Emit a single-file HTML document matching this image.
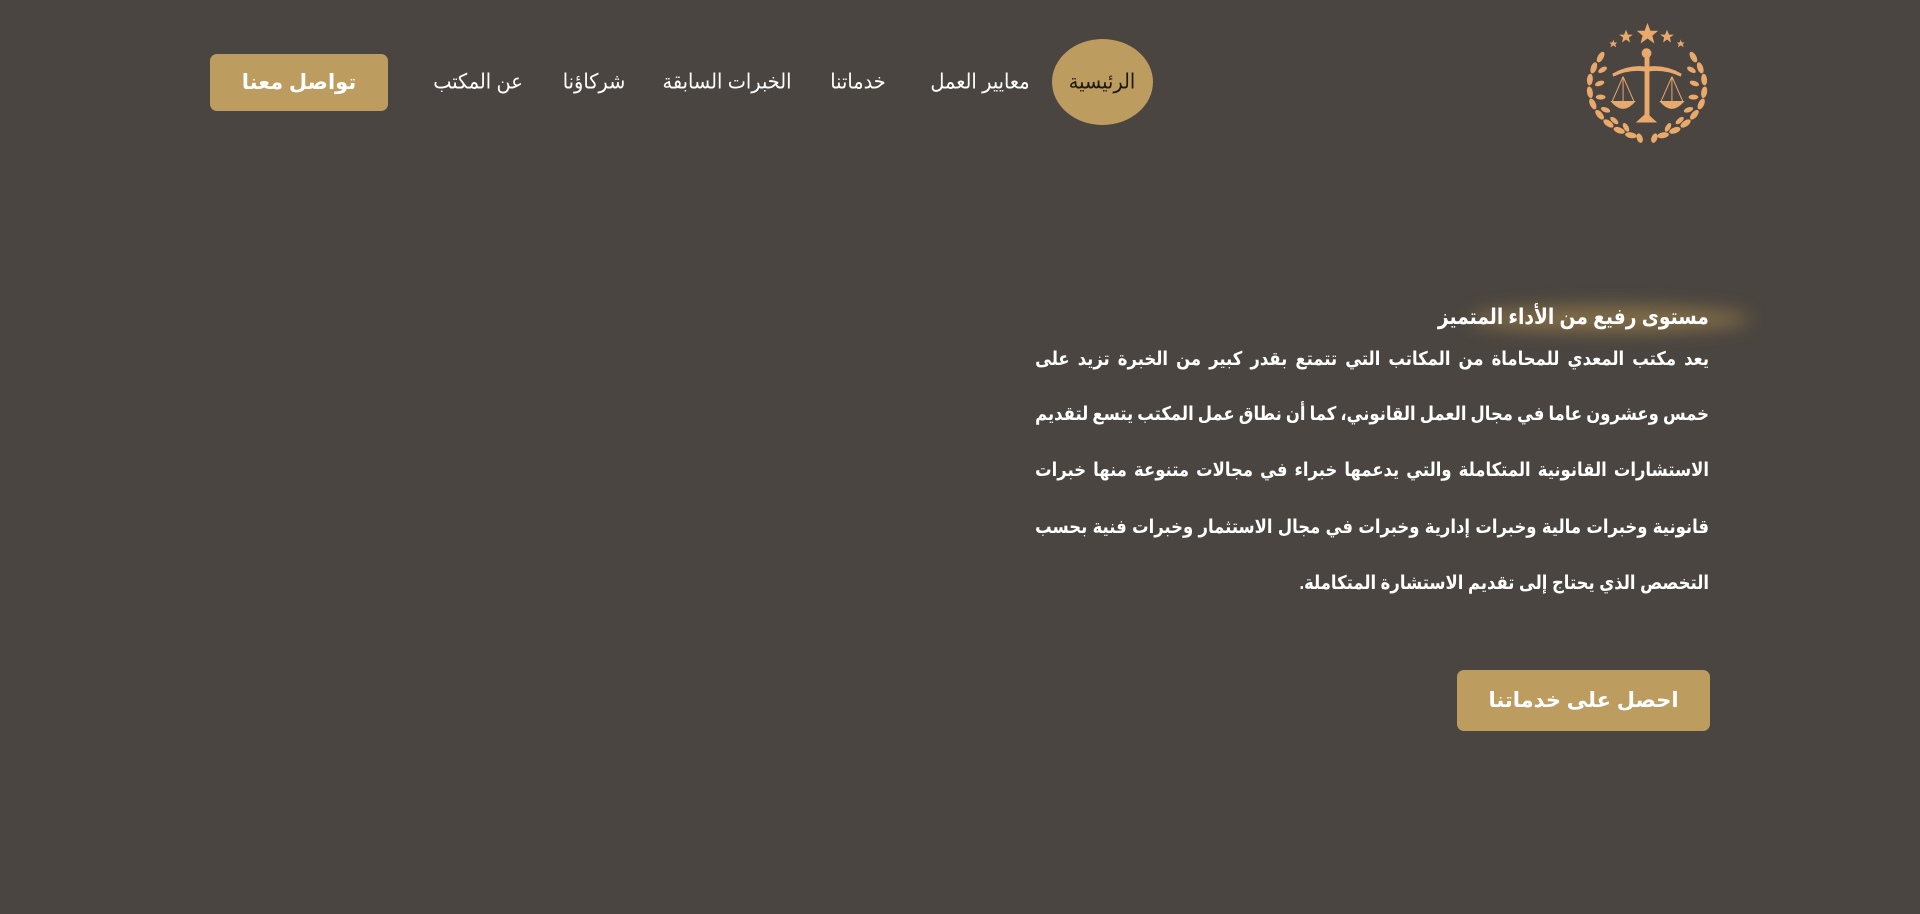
<!DOCTYPE html>
<html lang="ar" dir="rtl"><head><meta charset="utf-8">
<style>
*{margin:0;padding:0;box-sizing:border-box}
html,body{width:1920px;height:914px;overflow:hidden;background:#4a4540;font-family:"Liberation Sans","Noto Sans CJK SC","DejaVu Sans",sans-serif;color:#fff}
.abs{position:absolute}
.nav{position:absolute;top:82px;font-size:21px;color:#fff;transform:translate(-50%,-50%) scaleX(.92);white-space:nowrap}
.circle{left:1052px;top:39px;width:101px;height:86px;border-radius:50%;background:#bd9c5f}
.btn{background:#bd9c5f;border-radius:7px;display:flex;align-items:center;justify-content:center;font-weight:bold;color:#fff}
.line{position:absolute;right:211px;width:780px;font-size:19px;font-weight:bold;white-space:nowrap;line-height:24px;display:flex;justify-content:space-between;transform:scaleX(.864);transform-origin:right center}
.line.last{justify-content:flex-start;gap:6px}
.glow{left:1470px;top:306px;width:280px;height:26px;border-radius:50%;background:rgba(200,160,80,.45);filter:blur(9px)}
</style></head><body>
<svg class="abs" style="left:1585px;top:18px" width="125" height="127" viewBox="24 18 128 124">
<g fill="#e9a96c" stroke="none">
<polygon points="88,20 91,28 99,28 93,33 95,41 88,36 81,41 83,33 77,28 85,28"/>
<polygon points="66,27 68,32 73,32 69,35 70,40 66,37 62,40 63,35 59,32 64,32"/>
<polygon points="108,27 110,32 115,32 111,35 112,40 108,37 104,40 105,35 101,32 106,32"/>
<polygon points="53,37 54,40 57,40 55,42 56,45 53,43 50,45 51,42 49,40 52,40"/>
<polygon points="122,37 123,40 126,40 124,42 125,45 122,43 119,45 120,42 118,40 121,40"/>
<circle cx="87" cy="51" r="5"/>
<rect x="85" y="55" width="5" height="62"/>
<path d="M52,72 Q70,62 87,65 Q105,62 123,72 L122,75 Q105,67 87,70 Q70,67 53,75Z"/>
<path d="M50,100 Q63,116 76,100Z"/>
<path d="M100,100 Q113,116 126,100Z"/>
<path d="M76,122 L87,112 L98,122Z"/>
</g>
<g stroke="#e9a96c" stroke-width="1" fill="none">
<path d="M63,75 L52,100 M63,75 L74,100 M63,75 L63,100"/>
<path d="M113,75 L102,100 M113,75 L124,100 M113,75 L113,100"/>
</g>
<g fill="#e9a96c">
<g id="lf">
<ellipse cx="40" cy="55" rx="3" ry="6" transform="rotate(30 40 55)"/>
<ellipse cx="33" cy="66" rx="3" ry="6" transform="rotate(20 33 66)"/>
<ellipse cx="29" cy="78" rx="3" ry="6" transform="rotate(5 29 78)"/>
<ellipse cx="29" cy="91" rx="3" ry="6" transform="rotate(-10 29 91)"/>
<ellipse cx="32" cy="103" rx="3" ry="6" transform="rotate(-25 32 103)"/>
<ellipse cx="39" cy="114" rx="3" ry="6" transform="rotate(-40 39 114)"/>
<ellipse cx="48" cy="123" rx="3" ry="6" transform="rotate(-55 48 123)"/>
<ellipse cx="59" cy="130" rx="3" ry="6" transform="rotate(-70 59 130)"/>
<ellipse cx="71" cy="135" rx="3" ry="6" transform="rotate(-80 71 135)"/>
<ellipse cx="80" cy="138" rx="3" ry="5" transform="rotate(-20 80 138)"/>
<ellipse cx="42" cy="68" rx="2.5" ry="5" transform="rotate(60 42 68)"/>
<ellipse cx="39" cy="82" rx="2.5" ry="5" transform="rotate(70 39 82)"/>
<ellipse cx="40" cy="96" rx="2.5" ry="5" transform="rotate(90 40 96)"/>
<ellipse cx="45" cy="109" rx="2.5" ry="5" transform="rotate(110 45 109)"/>
<ellipse cx="54" cy="120" rx="2.5" ry="5" transform="rotate(130 54 120)"/>
<ellipse cx="66" cy="127" rx="2.5" ry="5" transform="rotate(150 66 127)"/>
</g>
<use href="#lf" transform="translate(175 0) scale(-1 1)"/>
</g>
</svg>
<div class="abs circle"></div>
<div class="nav" style="left:1102px;color:#1d1a16">الرئيسية</div>
<div class="nav" style="left:980px">معايير العمل</div>
<div class="nav" style="left:858px">خدماتنا</div>
<div class="nav" style="left:727px">الخبرات السابقة</div>
<div class="nav" style="left:594px">شركاؤنا</div>
<div class="nav" style="left:478px">عن المكتب</div>
<div class="abs btn" style="left:210px;top:54px;width:178px;height:57px;font-size:21px">تواصل معنا</div>
<div class="abs glow"></div>
<div class="abs" style="right:211px;top:302px;font-size:22px;font-weight:bold;line-height:30px;white-space:nowrap;transform:scaleX(.85);transform-origin:right center">مستوى رفيع من الأداء المتميز</div>
<div class="line" style="top:348px"><span>يعد</span><span>مكتب</span><span>المعدي</span><span>للمحاماة</span><span>من</span><span>المكاتب</span><span>التي</span><span>تتمتع</span><span>بقدر</span><span>كبير</span><span>من</span><span>الخبرة</span><span>تزيد</span><span>على</span></div>
<div class="line" style="top:403px"><span>خمس</span><span>وعشرون</span><span>عاما</span><span>في</span><span>مجال</span><span>العمل</span><span>القانوني،</span><span>كما</span><span>أن</span><span>نطاق</span><span>عمل</span><span>المكتب</span><span>يتسع</span><span>لتقديم</span></div>
<div class="line" style="top:459px"><span>الاستشارات</span><span>القانونية</span><span>المتكاملة</span><span>والتي</span><span>يدعمها</span><span>خبراء</span><span>في</span><span>مجالات</span><span>متنوعة</span><span>منها</span><span>خبرات</span></div>
<div class="line" style="top:516px"><span>قانونية</span><span>وخبرات</span><span>مالية</span><span>وخبرات</span><span>إدارية</span><span>وخبرات</span><span>في</span><span>مجال</span><span>الاستثمار</span><span>وخبرات</span><span>فنية</span><span>بحسب</span></div>
<div class="line last" style="top:572px"><span>التخصص الذي يحتاج إلى تقديم الاستشارة المتكاملة.</span></div>
<div class="abs btn" style="left:1457px;top:670px;width:253px;height:61px;font-size:21px">احصل على خدماتنا</div>
</body></html>
